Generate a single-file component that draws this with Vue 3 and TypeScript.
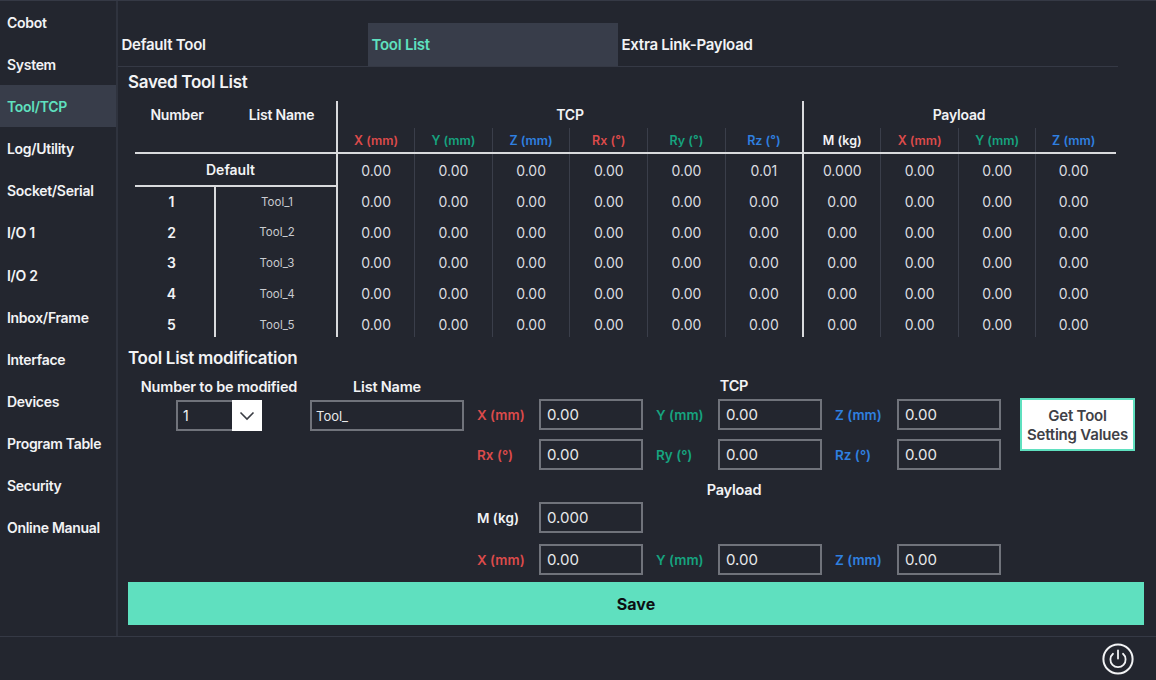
<template>
  <div class="app">
    <div class="body">
      <nav class="sidebar">
        <div v-for="item in menu" :key="item" class="nav-item" :class="{ active: item === 'Tool/TCP' }">{{ item }}</div>
      </nav>

      <main class="main">
        <div class="tabs">
          <div v-for="tab in tabs" :key="tab" class="tab" :class="{ active: tab === 'Tool List' }">{{ tab }}</div>
        </div>

        <h2 class="title saved-title">Saved Tool List</h2>

        <table class="tool-table">
          <colgroup>
            <col class="c-num" />
            <col class="c-name" />
            <col v-for="n in 6" :key="n" class="c-tcp" />
            <col class="c-mass" />
            <col class="c-pay" />
            <col class="c-pay" />
            <col class="c-last" />
          </colgroup>
          <thead>
            <tr class="head-1">
              <th class="head-num">Number</th>
              <th class="head-name">List Name</th>
              <th colspan="6" class="strong-l">TCP</th>
              <th colspan="4" class="strong-l head-pay">Payload</th>
            </tr>
            <tr class="head-2">
              <th colspan="2"></th>
              <th
                v-for="(col, i) in columns"
                :key="i"
                :class="[col.color, { 'strong-l': i === 0 || i === 6, 'faint-l': i !== 0 && i !== 6 }]"
              >{{ col.label }}</th>
            </tr>
          </thead>
          <tbody>
            <tr v-for="row in rows" :key="row.key">
              <td v-if="row.key === 'default'" colspan="2" class="default-cell">Default</td>
              <template v-else>
                <td class="num-cell">{{ row.key }}</td>
                <td class="name-cell">{{ row.name }}</td>
              </template>
              <td
                v-for="(val, i) in row.values"
                :key="i"
                :class="{ 'strong-l': i === 0 || i === 6, 'faint-l': i !== 0 && i !== 6 }"
              >{{ val }}</td>
            </tr>
          </tbody>
        </table>

        <h2 class="title mod-title">Tool List modification</h2>

        <div class="mod-form">
          <div class="field num-field">
            <div class="field-label">Number to be modified</div>
            <div class="select">
              <span class="select-value">1</span>
              <span class="select-arrow">
                <svg width="16" height="10" viewBox="0 0 16 10" fill="none">
                  <path d="M1.5 1.5 8 8l6.5-6.5" stroke="#3a3d44" stroke-width="1.6" />
                </svg>
              </span>
            </div>
          </div>

          <div class="field name-field">
            <div class="field-label">List Name</div>
            <input class="box name-input" value="Tool_" readonly />
          </div>

          <div class="coords">
            <div class="coords-title tcp-title">TCP</div>
            <div class="coord-grid">
              <label v-for="c in tcpFields" :key="c.label" class="coord">
                <span class="coord-label" :class="c.color">{{ c.label }}</span>
                <input class="box" :value="c.value" readonly />
              </label>
            </div>

            <div class="coords-title pay-title">Payload</div>
            <div class="coord-grid mass-row">
              <label class="coord">
                <span class="coord-label white">M (kg)</span>
                <input class="box" value="0.000" readonly />
              </label>
            </div>
            <div class="coord-grid pay-row">
              <label v-for="c in payFields" :key="c.label" class="coord">
                <span class="coord-label" :class="c.color">{{ c.label }}</span>
                <input class="box" :value="c.value" readonly />
              </label>
            </div>
          </div>

          <button class="get-btn">Get Tool<br />Setting Values</button>
        </div>

        <button class="save-btn">Save</button>
      </main>
    </div>

    <footer class="footer">
      <svg class="power" width="32" height="32" viewBox="0 0 32 32" fill="none">
        <circle cx="16" cy="16" r="14.6" stroke="#f2f3f5" stroke-width="2" />
        <path d="M11 10.8a7.6 7.6 0 1 0 10 0" stroke="#f2f3f5" stroke-width="1.8" stroke-linecap="round" />
        <path d="M16 7.5v8" stroke="#f2f3f5" stroke-width="1.8" stroke-linecap="round" />
      </svg>
    </footer>
  </div>
</template>

<script setup lang="ts">
interface Column {
  label: string
  color: string
}

const menu = [
  'Cobot', 'System', 'Tool/TCP', 'Log/Utility', 'Socket/Serial', 'I/O 1', 'I/O 2',
  'Inbox/Frame', 'Interface', 'Devices', 'Program Table', 'Security', 'Online Manual',
]

const tabs = ['Default Tool', 'Tool List', 'Extra Link-Payload']

const columns: Column[] = [
  { label: 'X (mm)', color: 'red' },
  { label: 'Y (mm)', color: 'green' },
  { label: 'Z (mm)', color: 'blue' },
  { label: 'Rx (°)', color: 'red' },
  { label: 'Ry (°)', color: 'green' },
  { label: 'Rz (°)', color: 'blue' },
  { label: 'M (kg)', color: 'white' },
  { label: 'X (mm)', color: 'red' },
  { label: 'Y (mm)', color: 'green' },
  { label: 'Z (mm)', color: 'blue' },
]

const zeros = ['0.00', '0.00', '0.00', '0.00', '0.00', '0.00', '0.00', '0.00', '0.00', '0.00']

const rows = [
  { key: 'default', name: '', values: ['0.00', '0.00', '0.00', '0.00', '0.00', '0.01', '0.000', '0.00', '0.00', '0.00'] },
  ...[1, 2, 3, 4, 5].map((n) => ({ key: String(n), name: `Tool_${n}`, values: zeros })),
]

const tcpFields = [
  { label: 'X (mm)', color: 'red', value: '0.00' },
  { label: 'Y (mm)', color: 'green', value: '0.00' },
  { label: 'Z (mm)', color: 'blue', value: '0.00' },
  { label: 'Rx (°)', color: 'red', value: '0.00' },
  { label: 'Ry (°)', color: 'green', value: '0.00' },
  { label: 'Rz (°)', color: 'blue', value: '0.00' },
]

const payFields = tcpFields.slice(0, 3)
</script>

<style>
html,
body {
  margin: 0;
  background: #23262f;
}
</style>

<style scoped>
.app {
  width: 1156px;
  height: 680px;
  display: flex;
  flex-direction: column;
  background: #23262f;
  color: #f2f3f5;
  font-family: Inter, "Liberation Sans", sans-serif;
  overflow: hidden;
}

.body {
  flex: 1;
  display: flex;
  min-height: 0;
  border-top: 1px solid #353945;
}

.sidebar {
  width: 116px;
  flex-shrink: 0;
  border-right: 2px solid #2f333e;
}

.nav-item {
  height: 42.17px;
  display: flex;
  align-items: center;
  padding-left: 7px;
  font-size: 14px;
  font-weight: 600;
  letter-spacing: -0.3px;
  white-space: nowrap;
}

.nav-item.active {
  background: #383d4a;
  color: #5fe0bf;
}

.main {
  flex: 1;
  min-width: 0;
  padding-top: 22px;
}

.tabs {
  display: flex;
  width: 1000px;
  height: 43px;
  border-bottom: 1px solid #353945;
}

.tab {
  width: 250px;
  display: flex;
  align-items: center;
  padding-left: 3.5px;
  font-size: 15px;
  font-weight: 600;
  letter-spacing: -0.25px;
  box-sizing: border-box;
}

.tab.active {
  background: #383d4a;
  color: #5fe0bf;
}

.title {
  margin: 0;
  margin-left: 10px;
  font-size: 17px;
  font-weight: 600;
  letter-spacing: -0.3px;
  line-height: 22px;
}

.saved-title {
  margin-top: 4px;
}

.tool-table {
  margin: 8px 0 0 17px;
  width: 981px;
  table-layout: fixed;
  border-collapse: collapse;
  font-size: 14px;
}

.c-num {
  width: 80px;
}

.c-name {
  width: 122px;
}

.c-tcp {
  width: 77.67px;
}

.c-mass {
  width: 78px;
}

.c-pay {
  width: 77.5px;
}

.c-last {
  width: 80px;
}

.tool-table th,
.tool-table td {
  padding: 0;
  text-align: center;
}

/* the rule runs a little past the last column, text stays centred on it */
.tool-table tr > :last-child:not(.head-pay) {
  padding-right: 5px;
}

.head-1 {
  height: 27px;
}

.head-1 th {
  font-size: 14px;
  font-weight: 600;
  letter-spacing: -0.2px;
}

.tool-table .head-num {
  padding-left: 4px;
}

.tool-table .head-name {
  padding-left: 12px;
}

.tool-table .head-pay {
  padding-right: 2px;
}

.head-2 {
  height: 25px;
  border-bottom: 2px solid #d9dadd;
}

.head-2 th {
  font-size: 12.5px;
  font-weight: 600;
}

.tool-table tbody tr {
  height: 30.8px;
}

.tool-table tbody tr:first-child {
  height: 33px;
}

.tool-table tbody tr:last-child {
  height: 28px;
}

.tool-table tbody tr:last-child td {
  padding-top: 3px;
}

.tool-table td {
  color: #dcdde0;
  font-weight: 400;
}

.tool-table .default-cell {
  padding-right: 10px;
  font-weight: 600;
  color: #f2f3f5;
  border-bottom: 2px solid #d9dadd;
}

.tool-table .num-cell {
  padding-right: 6px;
  font-weight: 600;
  color: #f2f3f5;
  border-right: 2px solid #d9dadd;
}

.tool-table .name-cell {
  padding-left: 2px;
  font-size: 11.5px;
  color: #c9cbd0;
}

.strong-l {
  border-left: 2px solid #d9dadd;
}

.faint-l {
  border-left: 1px solid #3a3e4a;
}

.red {
  color: #dc4b4b;
}

.green {
  color: #16a37f;
}

.blue {
  color: #2f80e0;
}

.white {
  color: #f2f3f5;
}

.mod-title {
  margin-top: 10px;
}

.mod-form {
  display: flex;
  align-items: flex-start;
  margin-left: 10px;
  margin-top: 8px;
}

.field {
  display: flex;
  flex-direction: column;
  align-items: center;
  margin-top: -1px;
}

.field-label {
  height: 22px;
  line-height: 22px;
  font-size: 14.5px;
  font-weight: 600;
  letter-spacing: -0.2px;
  white-space: nowrap;
}

.num-field {
  width: 182px;
}

.name-field {
  width: 154px;
}

.select {
  display: flex;
  width: 86px;
  height: 31px;
  margin-top: 2px;
  box-sizing: border-box;
  border: 2px solid #70737b;
}

.select-value {
  flex: 1;
  padding-left: 5px;
  font-size: 14px;
  line-height: 27px;
}

.select-arrow {
  width: 30px;
  margin: -2px -2px -2px 0;
  background: #fff;
  display: flex;
  align-items: center;
  justify-content: center;
}

.box {
  width: 104px;
  height: 31px;
  box-sizing: border-box;
  padding: 0 0 0 6px;
  background: transparent;
  border: 2px solid #70737b;
  border-radius: 0;
  outline: none;
  color: #e8e9eb;
  font-family: inherit;
  font-size: 15px;
}

.name-input {
  width: 154px;
  margin-top: 2px;
  padding-left: 4px;
  font-size: 13px;
}

.coords {
  margin-left: 13px;
  margin-top: -1px;
  width: 537px;
}

.coords-title {
  text-align: center;
  font-size: 14.5px;
  font-weight: 600;
  letter-spacing: -0.2px;
  height: 20px;
  line-height: 20px;
  margin-right: 23px;
}

.coord-grid {
  display: grid;
  grid-template-columns: repeat(3, 179px);
  row-gap: 9px;
  margin-top: 3px;
}

.coord {
  display: flex;
  align-items: center;
}

.coord-label {
  width: 62px;
  font-size: 13.5px;
  font-weight: 600;
  white-space: nowrap;
}

.pay-title {
  margin-top: 10px;
}

.mass-row {
  margin-top: 2px;
}

.pay-row {
  margin-top: 11px;
}

.get-btn {
  width: 115px;
  height: 53px;
  margin-left: 6px;
  margin-top: 21px;
  padding: 0;
  box-sizing: border-box;
  border: 2px solid #5fe0bf;
  background: #fff;
  color: #3f4147;
  font-family: inherit;
  font-size: 15px;
  font-weight: 600;
  letter-spacing: -0.2px;
  line-height: 19px;
}

.save-btn {
  display: block;
  width: 1016px;
  height: 43px;
  margin: 7px 0 0 10px;
  border: 0;
  padding: 0;
  background: #5fe0bf;
  color: #0d0f12;
  font-family: inherit;
  font-size: 16px;
  font-weight: 700;
}

.footer {
  height: 44px;
  flex-shrink: 0;
  border-top: 1px solid #353945;
  display: flex;
  justify-content: flex-end;
  align-items: flex-start;
  padding: 6px 22px 0 0;
  box-sizing: border-box;
}
</style>
